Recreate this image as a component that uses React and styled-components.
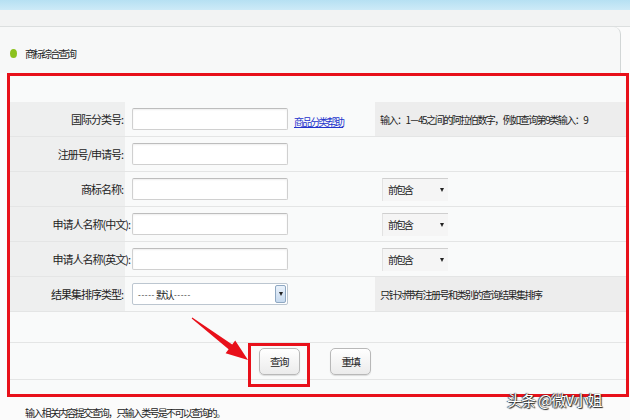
import React from "react";
import styled, { createGlobalStyle } from "styled-components";

const Global = createGlobalStyle`
  html, body { margin: 0; padding: 0; }
  body {
    font-family: "Noto Sans CJK SC", "Noto Sans", sans-serif;
    color: #222;
    background: #fbfbfb;
  }
`;

const RED = "#e8101a";

const Page = styled.div`
  position: relative;
  width: 630px;
  height: 420px;
  overflow: hidden;
  background: #fbfbfb;
`;

const TopBand = styled.div`
  height: 10px;
  background: linear-gradient(#b6e0f2, #cdeaf7);
`;

const Strip = styled.div`
  height: 16px;
  background: #f2f3f3;
  border-bottom: 1px solid #dcdfdf;
`;

const Header = styled.div`
  box-sizing: border-box;
  width: 621px;
  height: 46px;
  padding: 6px 0 0 10px;
  display: flex;
  align-items: center;
  gap: 8px;
  background: #f7f8f8;
  border-right: 1px solid #d2d6d6;
  border-top-right-radius: 7px;
`;

const Dot = styled.span`
  width: 7px;
  height: 9px;
  border-radius: 50%;
  background: #8cc21e;
`;

const Title = styled.span`
  font-size: 10.5px;
  letter-spacing: -2.2px;
  color: #222;
`;

const RedBox = styled.div`
  box-sizing: border-box;
  margin-left: 7px;
  width: 622px;
  height: 324px;
  border: 3px solid ${RED};
  background: #f9fafa;
  display: flex;
  flex-direction: column;
`;

const TopSpace = styled.div`
  height: 26px;
  flex: none;
`;

const Row = styled.div`
  box-sizing: border-box;
  height: ${(p) => p.h || 35}px;
  flex: none;
  display: grid;
  grid-template-columns: 115px 250px 1fr;
  border-bottom: 1px solid #e4e5e5;
`;

const LabelCell = styled.div`
  background: #eeefef;
  display: flex;
  align-items: center;
  justify-content: flex-end;
  padding-right: 2px;
  font-size: 11px;
  letter-spacing: -1px;
  white-space: nowrap;
  color: #222;
`;

const LabelText = styled.span`
  margin-right: ${(p) => (p.overhang ? -7 : 0)}px;
  position: relative;
`;

const ValueCell = styled.div`
  display: flex;
  align-items: center;
  padding-left: 7px;
  gap: 6px;
`;

const HintCell = styled.div`
  display: flex;
  align-items: center;
  padding-left: ${(p) => (p.shaded ? 5 : 7)}px;
  background: ${(p) => (p.shaded ? "#ededed" : "transparent")};
  font-size: 10px;
  letter-spacing: -1.5px;
  white-space: nowrap;
  color: #222;
`;

const TextInput = styled.div`
  box-sizing: border-box;
  width: 156px;
  height: 22px;
  background: #fff;
  border: 1px solid #d0d0d0;
  border-top-color: #bdbdbd;
  border-radius: 2px;
  box-shadow: inset 0 1px 2px rgba(0, 0, 0, 0.07);
`;

const HelpLink = styled.a`
  font-size: 10px;
  letter-spacing: -1.8px;
  color: #2233cc;
  text-decoration: underline;
  white-space: nowrap;
  margin-top: 4px;
`;

const Caret = styled.span`
  width: 0;
  height: 0;
  border-left: 2.5px solid transparent;
  border-right: 2.5px solid transparent;
  border-top: 4px solid #222;
`;

const SmallSelect = styled.div`
  box-sizing: border-box;
  width: 66px;
  height: 23px;
  padding: 0 4px 0 5px;
  display: flex;
  align-items: center;
  justify-content: space-between;
  background: #f5f5f5;
  border-top: 1px solid #cfcfcf;
  border-left: 1px solid #e2e2e2;
  font-size: 10px;
  letter-spacing: -2px;
  color: #222;
`;

const SortSelect = styled.div`
  box-sizing: border-box;
  width: 156px;
  height: 22px;
  padding: 1px 1px 1px 5px;
  display: flex;
  align-items: center;
  justify-content: space-between;
  background: #fff;
  border: 1px solid #bcc6d0;
  border-radius: 2px;
  font-size: 10px;
  color: #222;
`;

const Dashes = styled.span`
  font-size: 8px;
  letter-spacing: 0.6px;
`;

const SortText = styled.span`
  display: flex;
  align-items: center;
  gap: 1px;
  letter-spacing: -1.5px;
  white-space: nowrap;
`;

const DropButton = styled.span`
  box-sizing: border-box;
  width: 11px;
  height: 100%;
  display: flex;
  align-items: center;
  justify-content: center;
  background: linear-gradient(#eaf2fb, #c6d9ee);
  border: 1px solid #8fa8c2;
  border-radius: 2px;
`;

const ButtonRow = styled.div`
  box-sizing: border-box;
  height: 37px;
  flex: none;
  display: flex;
  align-items: flex-start;
  padding-left: 238px;
  border-bottom: 1px solid #e4e5e5;
`;

const ButtonMark = styled.div`
  box-sizing: border-box;
  width: 62px;
  height: 44px;
  flex: none;
  padding-top: 2px;
  display: flex;
  justify-content: center;
  align-items: flex-start;
  border: 3px solid ${RED};
  position: relative;
  z-index: 1;
`;

const Button = styled.div`
  box-sizing: border-box;
  width: 41px;
  height: 27px;
  margin-top: ${(p) => p.offset || 0}px;
  margin-left: ${(p) => p.gapLeft || 0}px;
  display: flex;
  align-items: center;
  justify-content: center;
  border: 1px solid #b8b8b8;
  border-radius: 5px;
  background: linear-gradient(#ffffff, #ebebeb);
  box-shadow: 0 1px 1px rgba(0, 0, 0, 0.12);
  font-size: 10.5px;
  letter-spacing: -1.5px;
  color: #222;
`;

const Note = styled.div`
  padding: 10px 0 0 25px;
  line-height: 12px;
  font-size: 10px;
  letter-spacing: -1.7px;
  color: #222;
`;

const ArrowSvg = styled.svg`
  position: absolute;
  left: 180px;
  top: 310px;
  z-index: 2;
`;

const Watermark = styled.div`
  position: absolute;
  left: 507px;
  top: 389px;
  font-size: 15px;
  letter-spacing: -0.8px;
  color: #fff;
  text-shadow: 1px 1px 1px #222, 0 0 1px #000, -1px 0 1px #555;
  white-space: nowrap;
`;

const SmallPick = () => (
  <SmallSelect>
    前包含
    <Caret />
  </SmallSelect>
);

const rows = [
  { label: "国际分类号:", link: true, hint: "输入：1－45之间的阿拉伯数字，例如查询第9类输入：9" },
  { label: "注册号/申请号:" },
  { label: "商标名称:", pick: true },
  { label: "申请人名称(中文):", pick: true, overhang: true },
  { label: "申请人名称(英文):", pick: true, overhang: true },
  { label: "结果集排序类型:", sort: true, hint: "只针对带有注册号和类别的查询结果集排序" },
];

export default function App() {
  return (
    <Page>
      <Global />
      <TopBand />
      <Strip />
      <Header>
        <Dot />
        <Title>商标综合查询</Title>
      </Header>
      <RedBox>
        <TopSpace />
        {rows.map((r) => (
          <Row key={r.label}>
            <LabelCell>
              <LabelText overhang={r.overhang}>{r.label}</LabelText>
            </LabelCell>
            <ValueCell>
              {r.sort ? (
                <SortSelect>
                  <SortText>
                    <Dashes>-----</Dashes>默认 <Dashes>-----</Dashes>
                  </SortText>
                  <DropButton>
                    <Caret />
                  </DropButton>
                </SortSelect>
              ) : (
                <TextInput />
              )}
              {r.link && <HelpLink href="#">商品分类帮助</HelpLink>}
            </ValueCell>
            <HintCell shaded={!!r.hint}>
              {r.hint}
              {r.pick && <SmallPick />}
            </HintCell>
          </Row>
        ))}
        <Row h={31} />
        <ButtonRow>
          <ButtonMark>
            <Button>查询</Button>
          </ButtonMark>
          <Button offset={5} gapLeft={20}>重填</Button>
        </ButtonRow>
      </RedBox>
      <Note>输入相关内容提交查询，只输入类号是不可以查询的。</Note>
      <ArrowSvg width="80" height="60" viewBox="0 0 80 60">
        <polygon
          points="12.3,7.6 52.2,34.4 55.2,30.4 68,50 45.6,43.2 48.6,39.2 11.7,8.4"
          fill={RED}
        />
      </ArrowSvg>
      <Watermark>头条 @微V小姐</Watermark>
    </Page>
  );
}
